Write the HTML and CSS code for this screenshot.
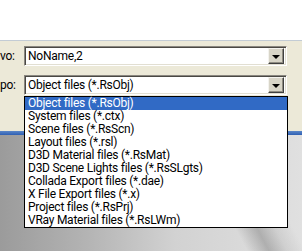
FILE: index.html
```html
<!DOCTYPE html>
<html lang="es">
<head>
  <meta charset="UTF-8" />
  <title>Guardar como</title>
  <link rel="stylesheet" href="styles.css">
</head>
<body>
  <div class="screen">
    <div class="top"></div>

    <div class="dialog">
      <div class="row">
        <span class="label">vo:</span>
        <div class="combo">
          <span class="value">NoName,2</span>
          <span class="drop-btn"><span class="arrow"></span></span>
        </div>
      </div>
      <div class="row">
        <span class="label">po:</span>
        <div class="combo">
          <span class="value">Object files (*.RsObj)</span>
          <span class="drop-btn"><span class="arrow"></span></span>
        </div>
      </div>
    </div>

    <div class="frame-edge"></div>
    <div class="desktop"></div>

    <!-- open list of the file type combo -->
    <ul class="dropdown">
      <li class="selected">Object files (*.RsObj)</li>
      <li>System files (*.ctx)</li>
      <li>Scene files (*.RsScn)</li>
      <li>Layout files (*.rsl)</li>
      <li>D3D Material files (*.RsMat)</li>
      <li>D3D Scene Lights files (*.RsSLgts)</li>
      <li>Collada Export files (*.dae)</li>
      <li>X File Export files (*.x)</li>
      <li>Project files (*.RsPrj)</li>
      <li>VRay Material files (*.RsLWm)</li>
    </ul>
  </div>
</body>
</html>
```

FILE: styles.css
```css
body {
  margin: 0;
  font-family: Roboto, "Liberation Sans", sans-serif;
  font-size: 12px;
  letter-spacing: -0.25px;
  color: #000;
}

.screen {
  position: relative;
  width: 302px;
  height: 251px;
  display: flex;
  flex-direction: column;
  overflow: hidden;
}

.top {
  height: 40px;
  background-color: #fff;
}

.dialog {
  height: 91px;
  border-top: 1px solid #c3ccd5;
  background-color: #ece9d8;
  padding-top: 5px;
  box-sizing: border-box;
  display: flex;
  flex-direction: column;
  gap: 9px;
}

.row {
  display: flex;
  align-items: center;
  height: 20px;
}

.label {
  width: 24px;
  flex-shrink: 0;
  line-height: 20px;
}

/* sunken combo box */
.combo {
  width: 263px;
  height: 20px;
  box-sizing: border-box;
  background-color: #fff;
  border-top: 1px solid #8a8780;
  border-left: 1px solid #8a8780;
  border-right: 1px solid #fff;
  border-bottom: 1px solid #fff;
  box-shadow: inset 1px 1px 0 #4a4843, inset -1px -1px 0 #e2dfd2;
  display: flex;
  align-items: center;
  justify-content: space-between;
  padding: 0 2px 0 3px;
}

.value {
  line-height: 16px;
}

.drop-btn {
  width: 16px;
  height: 16px;
  box-sizing: border-box;
  background-color: #d8d5c8;
  border-top: 1px solid #f4f3ee;
  border-left: 1px solid #f4f3ee;
  border-right: 1px solid #404040;
  border-bottom: 1px solid #404040;
  box-shadow: inset -1px -1px 0 #8f8c82;
  display: flex;
  align-items: center;
  justify-content: center;
}

.arrow {
  width: 0;
  height: 0;
  border-left: 4px solid transparent;
  border-right: 4px solid transparent;
  border-top: 4px solid #000;
  margin: 1px 1px 0 0;
}

.frame-edge {
  height: 4px;
  background: linear-gradient(to bottom, #5a86c8, #2e5fb3);
}

.desktop {
  flex: 1;
  background:
    linear-gradient(62deg, transparent 68%, rgba(120,120,120,0.45) 74%, rgba(150,150,150,0.2) 79%, transparent 84%),
    linear-gradient(to right, #9b9b9b 0%, #b3b3b3 28%, #d2d2d2 58%, #e0e0e0 100%);
}

/* dropdown list lies over the dialog */
.dropdown {
  position: absolute;
  top: 96px;
  left: 24px;
  width: 264px;
  margin: 0;
  padding: 0;
  list-style: none;
  background-color: #fff;
  border: 1px solid #000;
  box-sizing: border-box;
}

.dropdown li {
  height: 13px;
  line-height: 13px;
  padding-left: 3px;
  white-space: nowrap;
}

.dropdown li.selected {
  background-color: #316ac5;
  color: #fff;
}
```
